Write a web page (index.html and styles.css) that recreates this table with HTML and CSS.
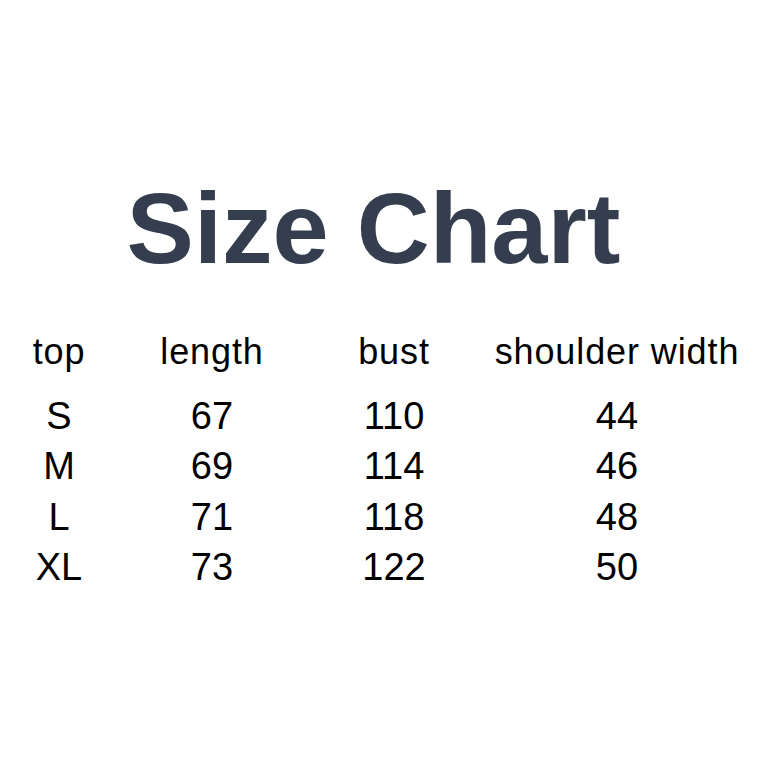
FILE: index.html
```html
<!DOCTYPE html>
<html>
<head>
<meta charset="utf-8">
<link rel="stylesheet" href="styles.css">
</head>
<body>
<div class="page">
  <h1 class="title">Size Chart</h1>
  <div class="chart">
    <div class="th">top</div><div class="th">length</div><div class="th">bust</div><div class="th">shoulder width</div>
    <div class="td">S</div><div class="td">67</div><div class="td">110</div><div class="td">44</div>
    <div class="td">M</div><div class="td">69</div><div class="td">114</div><div class="td">46</div>
    <div class="td">L</div><div class="td">71</div><div class="td">118</div><div class="td">48</div>
    <div class="td">XL</div><div class="td">73</div><div class="td">122</div><div class="td">50</div>
  </div>
</div>
</body>
</html>
```

FILE: styles.css
```css
html, body {
  margin: 0;
  padding: 0;
  background: #ffffff;
}
.page {
  width: 758px;
  height: 758px;
  padding-top: 178px;
  box-sizing: border-box;
  font-family: "Liberation Sans", Arial, sans-serif;
  color: #000;
}
.title {
  margin: 0;
  padding-right: 11px;
  text-align: center;
  font-size: 101px;
  line-height: 101px;
  font-weight: 700;
  color: #343e4e;
}
.chart {
  margin-top: 51px;
  display: grid;
  grid-template-columns: 118px 188px 176px 270px;
  justify-items: center;
}
.th {
  font-size: 36px;
  letter-spacing: 0.9px;
  line-height: 40px;
  padding-top: 2px;
  padding-bottom: 19px;
  white-space: nowrap;
}
.td {
  font-size: 38px;
  line-height: 50.3px;
}
```
